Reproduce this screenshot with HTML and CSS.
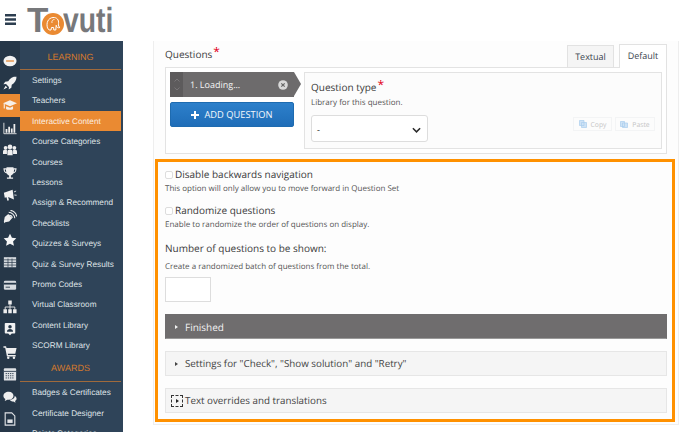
FILE: index.html
```html
<!DOCTYPE html>
<html lang="en">
<head>
<meta charset="utf-8">
<title>Tovuti</title>
<link rel="stylesheet" href="styles.css">
</head>
<body>
<header class="topbar">
  <svg class="burger" viewBox="0 0 11 11" width="11" height="11"><path d="M0 1.300h11M0 5.500h11M0 9.700h11" stroke="#2d3e50" stroke-width="2.400" fill="none"/></svg>
  <div class="logo"><span>T</span><svg class="logo-o" viewBox="0 0 22 22" width="22" height="22"><circle cx="11" cy="11" r="11" fill="#ea8a32"/><path d="M5.500 15c-1.500-5 .5-10 5.500-10.500 4-.3 6 2.500 5.500 6-.3 2 .2 3.500 1.500 4-1.800.8-3.500-.2-3.800-2.200l-.4 4.700h-2l-.2-2.500H9.500L9 17H7.200z" fill="none" stroke="#fff" stroke-width="1"/><path d="M12.500 6.500c-2 0-3 1.500-2.500 3.500" fill="none" stroke="#fff" stroke-width=".8"/></svg><span class="logo-rest">vuti</span></div>
</header>
<div class="body">
  <aside class="sidebar">
    <nav class="icons">
      <div class="ico"><svg viewBox="0 0 16 16"><ellipse cx="8" cy="8" rx="7.500" ry="6" fill="#f2f2f2"/><rect x="3.500" y="7" width="9" height="2" fill="#e8a468"/></svg></div>
      <div class="ico"><svg viewBox="0 0 16 16"><path d="M15.500.500c-4.500 0-7.500 2-9.500 5.500L2.500 6.500.5 9.500l3-.3 3.300 3.300-.3 3 3-2 .5-3.500c3.500-2 5.500-5 5.500-10zM3 11l-2.500 4.500L5 13z" fill="#f2f2f2"/></svg></div>
      <div class="ico active"><svg viewBox="0 0 16 16"><path d="M8 2.500 0 6l8 3.500L16 6z" fill="#f7f0e8"/><path d="M3.500 9.500v3c2 1.300 6 1.300 8 .3V9.500L8 11zM.8 6.500v5.500h1.300V7z" fill="#f7f0e8"/></svg></div>
      <div class="ico"><svg viewBox="0 0 16 16"><path d="M1 2v12.500h14.500" stroke="#eee" fill="none"/><path d="M3 9h2v4.500H3zM6 6.500h2v7H6zM9 8.500h2v5H9zM12 3.500h2v10h-2z" fill="#eee"/></svg></div>
      <div class="ico"><svg viewBox="0 0 16 16"><g fill="#eee"><circle cx="3" cy="5.500" r="2.200"/><circle cx="13" cy="5.500" r="2.200"/><circle cx="8" cy="4.500" r="2.700"/><path d="M0 12.500V10c0-1.500 1-2.500 3-2.500l1.500.5V12.500zM16 12.500V10c0-1.500-1-2.500-3-2.500l-1.500.5v4.500zM5 14V10c0-1.700 1-2.500 3-2.500s3 .8 3 2.500v4z"/></g></svg></div>
      <div class="ico"><svg viewBox="0 0 16 16"><path d="M4 1.500h8v1h3.500c0 3-1 5.500-3.800 6C11 10 9.500 10.500 9 11v2h2.500v1.500h-7V13H7v-2c-.5-.5-2-1-2.700-2.500C1.500 8 .5 5.500.5 2.500H4zM2 4c0 1.500.5 2.500 1.700 3L3.300 4zM14 4h-1.300l-.4 3C13.500 6.500 14 5.500 14 4z" fill="#eee" fill-rule="evenodd"/></svg></div>
      <div class="ico"><svg viewBox="0 0 16 16"><path d="M1 5.500l1 5.500 2-.4 1 3.900 1.800-.4-.9-3.900L12.500 13 11 2z" fill="#f2f2f2"/><path d="M12.500 4.500l2.500-1M13 8l2.500.3" stroke="#f2f2f2" fill="none"/></svg></div>
      <div class="ico"><svg viewBox="0 0 16 16"><path d="M1.500 15 1 13l1-5 4-3.500L10.500 9 7 13l-4.500 1z" fill="#eee"/><path d="M6.500 2.500c3.500 0 7 3.500 7 7M8.500.5c3.500 0 7 3.500 7 7M7 6c2 0 3.500 1.500 3.500 3" stroke="#eee" fill="none" stroke-width="1.200"/></svg></div>
      <div class="ico"><svg viewBox="0 0 16 16"><path d="M8 .8l2.200 4.700 5 .6-3.700 3.500 1 5.100L8 12.200l-4.500 2.500 1-5.100L.8 6.100l5-.6z" fill="#f7f7f7"/></svg></div>
      <div class="ico"><svg viewBox="0 0 16 16"><rect x="1" y="2.500" width="14" height="11.500" fill="#d7dbdf"/><path d="M1 5.500h14M1 8.500h14M1 11.500h14M5.700 4v10M10.300 4v10" stroke="#263748" stroke-width=".8" fill="none"/></svg></div>
      <div class="ico"><svg viewBox="0 0 16 16"><rect x="1" y="3" width="14" height="10.500" rx="1.500" fill="#d7dbdf"/><rect x="1" y="5.500" width="14" height="2" fill="#263748"/><path d="M3 10.500h5" stroke="#263748"/></svg></div>
      <div class="ico"><svg viewBox="0 0 16 16"><path d="M8 5v3M2.500 11V8h11v3M8 8v3" stroke="#eee" fill="none"/><path d="M6 .5h4v4.500H6zM.5 10.500h4V15h-4zM6 10.500h4V15H6zM11.500 10.500h4V15h-4z" fill="#eee"/></svg></div>
      <div class="ico"><svg viewBox="0 0 16 16"><path d="M3 1h10a1 1 0 0 1 1 1v10a1 1 0 0 1-1 1h-3l-2 2-2-2H3a1 1 0 0 1-1-1V2a1 1 0 0 1 1-1z" fill="#f2f2f2"/><circle cx="8" cy="5.500" r="2" fill="#263748"/><path d="M4.500 11c0-2 1.500-3 3.500-3s3.500 1 3.500 3z" fill="#263748"/></svg></div>
      <div class="ico"><svg viewBox="0 0 16 16"><path d="M.5 1.500h3l.5 2h11.500l-1.500 6.500H5.500l.3 1.500H14.500V13H4.500L2.500 3H.5z" fill="#eee"/><circle cx="6" cy="14.500" r="1.400" fill="#eee"/><circle cx="12.500" cy="14.500" r="1.400" fill="#eee"/></svg></div>
      <div class="ico"><svg viewBox="0 0 16 16"><rect x="1" y="1.500" width="14" height="14" rx="1" fill="#dfe2e5"/><path d="M1 5h14" stroke="#263748"/><path d="M3 7.500h10M3 10h10M3 12.500h10" stroke="#263748" stroke-dasharray="1.500 1"/></svg></div>
      <div class="ico"><svg viewBox="0 0 16 16"><path d="M6.500 2C3 2 .5 4 .5 6.800c0 1.500 1 2.800 2.200 3.500L2 12.500 5 11h1.500C10 11 12 9 12 6.500S10 2 6.500 2z" fill="#eee"/><path d="M13 6.500c1.500.6 2.500 2 2.500 3.500 0 1-.7 2-1.700 2.500l.5 2-2.500-1.500c-2 0-3.500-.7-4-2 3 0 5.700-1.500 5.700-4.500z" fill="#eee"/></svg></div>
      <div class="ico"><svg viewBox="0 0 16 16"><path d="M2.500 1h7.500L13.500 4.500V15h-11z" fill="none" stroke="#dfe2e5" stroke-width="1.300"/><path d="M5 8.500h6v4H5z" fill="#dfe2e5"/></svg></div>
    </nav>
    <nav class="menu">
      <h3 class="menu-head">LEARNING</h3>
      <a class="menu-item">Settings</a>
      <a class="menu-item">Teachers</a>
      <a class="menu-item current">Interactive Content</a>
      <a class="menu-item">Course Categories</a>
      <a class="menu-item">Courses</a>
      <a class="menu-item">Lessons</a>
      <a class="menu-item">Assign &amp; Recommend</a>
      <a class="menu-item">Checklists</a>
      <a class="menu-item">Quizzes &amp; Surveys</a>
      <a class="menu-item">Quiz &amp; Survey Results</a>
      <a class="menu-item">Promo Codes</a>
      <a class="menu-item">Virtual Classroom</a>
      <a class="menu-item">Content Library</a>
      <a class="menu-item">SCORM Library</a>
      <h3 class="menu-head second">AWARDS</h3>
      <a class="menu-item">Badges &amp; Certificates</a>
      <a class="menu-item">Certificate Designer</a>
      <a class="menu-item">Points Categories</a>
    </nav>
  </aside>
  <main class="content">
    <section class="panel">
      <div class="q-head">
        <div class="q-label">Questions<span class="req">*</span></div>
        <div class="tabs"><span class="tab">Textual</span><span class="tab on">Default</span></div>
      </div>
      <div class="q-box">
        <div class="q-list">
          <div class="q-item">
            <div class="q-arrows"><svg viewBox="0 0 8 6" width="8" height="6"><path d="M1.500 4.500l2.500-2.500 2.500 2.500" stroke="#858384" fill="none" stroke-width=".7"/></svg><svg viewBox="0 0 8 6" width="8" height="6"><path d="M1.500 1.500l2.500 2.500 2.500-2.500" stroke="#858384" fill="none" stroke-width=".7"/></svg></div>
            <span class="q-name">1. Loading...</span>
            <svg class="q-x" viewBox="0 0 10 10" width="10" height="10"><circle cx="5" cy="5" r="4.800" fill="#d9d9d9"/><path d="M3.300 3.300l3.400 3.400M6.700 3.300l-3.400 3.400" stroke="#666" stroke-width="1.200"/></svg>
          </div>
          <button class="add-btn"><svg viewBox="0 0 8 8" width="8" height="8"><path d="M4 0v8M0 4h8" stroke="#fff" stroke-width="2"/></svg>ADD QUESTION</button>
        </div>
        <div class="q-type">
          <div class="q-type-l">Question type<span class="req">*</span></div>
          <p class="help">Library for this question.</p>
          <div class="sel">-<svg viewBox="0 0 10 6" width="9" height="6"><path d="M1 1l4 4 4-4" stroke="#2a2a2a" fill="none" stroke-width="1.700"/></svg></div>
          <div class="cp">
            <span class="cp-btn copy"><svg viewBox="0 0 8 8" width="8" height="8"><path d="M.5.500h4.500v5H.5zM2.500 2.500h5v5h-5z" fill="#cfe3f6" stroke="#a9cdee" stroke-width=".7"/></svg>Copy</span>
            <span class="cp-btn paste"><svg viewBox="0 0 8 8" width="8" height="8"><path d="M.5 1.500h4v5h-4zM2.500 3h5v4.500h-5z" fill="#cfe3f6" stroke="#a9cdee" stroke-width=".7"/></svg>Paste</span>
          </div>
        </div>
      </div>
      <div class="hl">
        <div class="check"><span class="cb"></span>Disable backwards navigation</div>
        <p class="help h1">This option will only allow you to move forward in Question Set</p>
        <div class="check c2"><span class="cb"></span>Randomize questions</div>
        <p class="help h1">Enable to randomize the order of questions on display.</p>
        <div class="num-l">Number of questions to be shown:</div>
        <p class="help h2">Create a randomized batch of questions from the total.</p>
        <div class="num"></div>
        <div class="group dark"><i class="tri"></i>Finished</div>
        <div class="group"><i class="tri"></i>Settings for "Check", "Show solution" and "Retry"</div>
        <div class="group focus"><span class="fr"><i class="tri"></i></span>Text overrides and translations</div>
      </div>
    </section>
  </main>
</div>
</body>
</html>
```
FILE: styles.css
```css
* { box-sizing: border-box; }
html, body { margin: 0; height: 432px; overflow: hidden; background: #fff; }
body { font-family: "Open Sans", sans-serif; color: #3c3c3c; text-rendering: geometricPrecision; }
.topbar { height: 41px; display: flex; align-items: flex-start; padding: 14px 0 0 5px; }
.burger { display: block; }
.logo { display: flex; align-items: flex-start; margin: -6px 0 0 11px; height: 28px; font: bold 35px/26px "Liberation Sans", sans-serif; color: #77787b; }
.logo-o { margin: 5px -1px 0 -6px; position: relative; }
.logo-rest { transform: scaleX(.81); transform-origin: left center; }
.body { display: flex; height: 391px; }
.sidebar { width: 123px; flex: none; display: flex; background: #2f4459; overflow: hidden; }
.icons { width: 20px; flex: none; background: #263748; padding-top: 8.500px; }
.ico { height: 22.400px; display: flex; align-items: center; justify-content: center; }
.ico svg { width: 14px; height: 14px; display: block; }
.ico.active { background: #ea8a32; }
.menu { width: 101px; flex: none; }
.menu-head { margin: 0; height: 29px; border-bottom: 1px solid #a06a3c; font: 400 9px/33px "Liberation Sans", sans-serif; color: #d4792c; text-align: center; }
.menu-head.second { height: 27px; line-height: 27px; }
.menu-item { display: block; height: 20.400px; padding-left: 12px; font: 8.200px/21.400px "Liberation Sans", sans-serif; color: #dfe3e7; white-space: nowrap; }
.menu-item.current { background: #ea8a32; color: #fbeee0; }
.content { flex: 1; padding: 0 9px 7px 30px; min-width: 0; }
.panel { height: 384px; border: 1px solid #eee; border-top: 0; background: #fdfdfd; padding: 0 3px 3px 1px; }
.q-head { display: flex; justify-content: space-between; align-items: flex-end; margin: 0 8px 0 10px; height: 26px; }
.q-label { font-size: 10px; line-height: 20px; align-self: flex-start; margin-top: 3px; }
.req { color: #e2001a; font-size: 12px; vertical-align: 2px; margin-left: 1px; line-height: 1; }
.tabs { display: flex; gap: 5px; align-items: flex-end; margin-bottom: -1px; }
.tab { width: 47px; height: 23px; text-align: center; font-size: 9px; line-height: 22px; background: #f5f5f5; border: 1px solid #e2e2e2; border-bottom: 1px solid #e2e2e2; color: #3c4650; }
.tab.on { width: 48px; height: 24px; background: #fff; border-bottom: 0; }
.q-box { display: flex; margin: 0 8px 0 10px; height: 87px; border: 1px solid #e3e3e3; background: #fff; padding: 4px; }
.q-list { width: 124px; flex: none; }
.q-item { position: relative; height: 25px; width: 124px; background: #6d6b6c; display: flex; align-items: center; color: #f4f4f4; font-size: 9px; }
.q-item::after { content: ""; position: absolute; left: 100%; top: 0; border-left: 7px solid #6d6b6c; border-top: 12.500px solid transparent; border-bottom: 12.500px solid transparent; }
.q-arrows { width: 13px; height: 100%; background: #5d5b5c; display: flex; flex-direction: column; align-items: center; justify-content: center; gap: 3px; margin-right: 7px; }
.q-arrows svg { display: block; }
.q-name { flex: 1; }
.q-x { margin-right: 6px; }
.add-btn { display: flex; align-items: center; justify-content: center; gap: 5px; width: 124px; height: 25px; margin-top: 5px; padding: 0; border: 1px solid #1e6bb0; border-radius: 2px; background: linear-gradient(#2d80cb, #1f6db8); color: #f4f8fc; font: 9.300px "Open Sans", sans-serif; }
.q-type { position: relative; margin-left: 10px; flex: 1; height: 77px; border: 1px solid #e3e3e3; background: #fcfcfc; padding: 4px 6px; }
.q-type-l { font-size: 10px; line-height: 20px; color: #3a3a3a; }
.help { margin: 0; font-size: 8px; line-height: 11px; color: #555; }
.sel { display: flex; justify-content: space-between; align-items: center; width: 117px; height: 27px; margin-top: 7px; padding: 2px 6px 0 5px; border: 1px solid #ddd; border-radius: 3px; background: #fff; font-size: 9px; color: #222; }
.cp { position: absolute; right: 6px; bottom: 17px; display: flex; gap: 3px; }
.cp-btn { display: flex; align-items: center; justify-content: center; gap: 4px; height: 14px; border: 1px solid #f3f4f5; font-size: 6.800px; color: #c5c5c5; }
.copy { width: 39px; }
.paste { width: 40px; }
.hl { height: 263px; margin-top: 5px; border: 3px solid #ff9100; background: #fdfdfd; padding: 4px 5px 0 7px; }
.check { display: flex; align-items: center; font-size: 10px; line-height: 14px; padding-top: 1px; color: #3a3a3a; }
.c2 { margin-top: 8px; }
.cb { width: 8px; height: 8px; margin: 2px 2px 0 0; border: 1px solid #ddd; border-radius: 2px; background: #fff; }
.help.h1 { margin-top: 2px; }
.num-l { margin-top: 11px; font-size: 10px; line-height: 14px; color: #3a3a3a; }
.help.h2 { margin-top: 5.500px; }
.num { width: 46px; height: 25px; margin-top: 5.500px; border: 1px solid #ddd; background: #fff; }
.group { display: flex; align-items: center; height: 25px; margin-top: 12px; padding-left: 9px; border: 1px solid #e6e6e6; background: #f5f5f5; font-size: 9.800px; color: #444; }
.group.dark { background: #6f6d6e; border-color: #6f6d6e; border-bottom-color: #999; color: #f2f2f2; font-weight: 500; font-size: 10px; }
.tri { width: 0; height: 0; margin-right: 7px; border-left: 3px solid currentColor; border-top: 2.500px solid transparent; border-bottom: 2.500px solid transparent; }
.group.focus { padding-left: 5px; }
.fr { display: flex; align-items: center; justify-content: center; width: 12px; height: 12px; margin-right: 2px; border: 1px dashed #333; }
.fr .tri { margin: 0; color: #222; }
```
